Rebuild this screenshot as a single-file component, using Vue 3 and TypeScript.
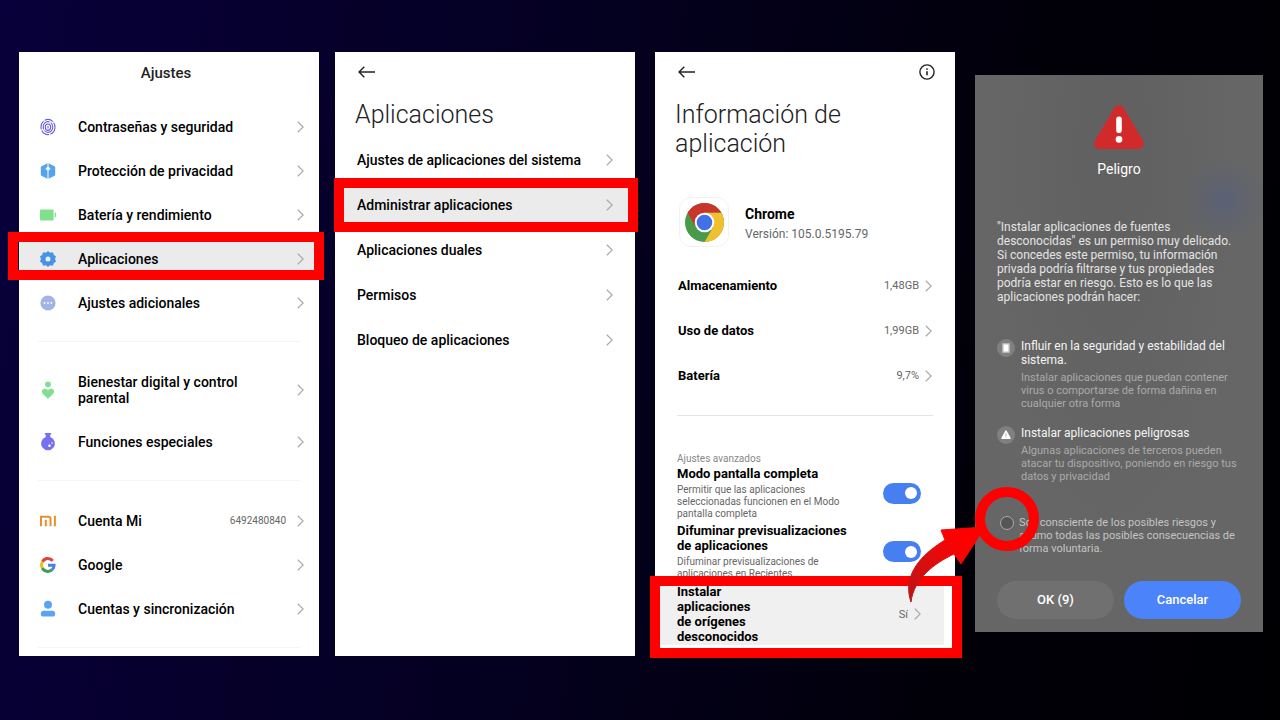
<script setup lang="ts">
import { ref } from 'vue'

interface Row {
  label: string
  icon?: string
  value?: string
  active?: boolean
  tall?: boolean
}

const settingsGroups: Row[][] = [
  [
    { label: 'Contraseñas y seguridad', icon: 'fingerprint' },
    { label: 'Protección de privacidad', icon: 'shield' },
    { label: 'Batería y rendimiento', icon: 'battery' },
    { label: 'Aplicaciones', icon: 'gear', active: true },
    { label: 'Ajustes adicionales', icon: 'dots' },
  ],
  [
    { label: 'Bienestar digital y control\nparental', icon: 'wellbeing', tall: true },
    { label: 'Funciones especiales', icon: 'flask' },
  ],
  [
    { label: 'Cuenta Mi', icon: 'mi', value: '6492480840' },
    { label: 'Google', icon: 'google' },
    { label: 'Cuentas y sincronización', icon: 'person' },
  ],
]

const appRows: Row[] = [
  { label: 'Ajustes de aplicaciones del sistema' },
  { label: 'Administrar aplicaciones', active: true },
  { label: 'Aplicaciones duales' },
  { label: 'Permisos' },
  { label: 'Bloqueo de aplicaciones' },
]

const usageRows: Row[] = [
  { label: 'Almacenamiento', value: '1,48GB' },
  { label: 'Uso de datos', value: '1,99GB' },
  { label: 'Batería', value: '9,7%' },
]

const toggles = ref([
  {
    id: 'fullscreen',
    title: 'Modo pantalla completa',
    text: 'Permitir que las aplicaciones\nseleccionadas funcionen en el Modo\npantalla completa',
    on: true,
  },
  {
    id: 'blur-previews',
    title: 'Difuminar previsualizaciones\nde aplicaciones',
    text: 'Difuminar previsualizaciones de\naplicaciones en Recientes',
    on: true,
  },
])

const risks = [
  {
    icon: 'device',
    title: 'Influir en la seguridad y estabilidad del\nsistema.',
    text: 'Instalar aplicaciones que puedan contener\nvirus o comportarse de forma dañina en\ncualquier otra forma',
  },
  {
    icon: 'alert',
    title: 'Instalar aplicaciones peligrosas',
    text: 'Algunas aplicaciones de terceros pueden\natacar tu dispositivo, poniendo en riesgo tus\ndatos y privacidad',
  },
]

const accepted = ref(false)
</script>

<template>
  <main class="stage">
    <section class="panel panel-settings">
      <h1 class="settings-title">Ajustes</h1>
      <template v-for="(group, g) in settingsGroups" :key="g">
        <nav class="group">
          <a
            v-for="row in group"
            :key="row.label"
            href="#"
            class="row"
            :class="{ active: row.active, tall: row.tall }"
          >
            <svg class="row-icon" viewBox="0 0 16 16" aria-hidden="true">
              <g v-if="row.icon === 'fingerprint'" fill="none" stroke="#6a5fd6" stroke-width="1.1">
                <ellipse cx="8" cy="8" rx="7" ry="7.6" stroke-dasharray="9 1.2" />
                <ellipse cx="8" cy="8" rx="4.8" ry="5.4" stroke-dasharray="12 1.2" />
                <ellipse cx="8" cy="8.2" rx="2.7" ry="3.2" />
                <path d="M8 6.9v2.6" />
              </g>
              <g v-else-if="row.icon === 'shield'" fill="#56a4ef">
                <path d="M7.5.2v3.600L5.400 5.700l2.100 1.900v8.200L1.400 12.800Q.8 12.500.8 11.800V4.200Q.8 3.500 1.400 3.200Z" />
                <path d="M8.500.2v3.600l2.100 1.900-2.100 1.900v8.200l6.100-3q.6-.3.6-1V4.200q0-.7-.6-1Z" />
              </g>
              <g v-else-if="row.icon === 'battery'" fill="#80e08c">
                <rect x="0" y="2.500" width="13.600" height="11" rx="1" />
                <rect x="14.700" y="5.600" width="1.300" height="4.600" rx=".4" />
              </g>
              <g v-else-if="row.icon === 'gear'" fill="#4793e4">
                <path
                  fill-rule="evenodd"
                  d="M8 0l2.100 1.700 2.800-.5.800 2.600L16 5.500 15 8l1 2.500-2.300 1.700-.8 2.600-2.800-.5L8 16l-2.100-1.700-2.800.5-.8-2.600L0 10.500 1 8 0 5.500l2.300-1.700.8-2.600 2.800.5ZM8 5.500a2.500 2.500 0 1 0 0 5 2.500 2.500 0 0 0 0-5Z"
                />
              </g>
              <g v-else-if="row.icon === 'dots'">
                <circle cx="8" cy="8" r="7.600" fill="#a3b3e4" />
                <g fill="#fff">
                  <circle cx="4.600" cy="8" r=".9" />
                  <circle cx="8" cy="8" r=".9" />
                  <circle cx="11.400" cy="8" r=".9" />
                </g>
              </g>
              <g v-else-if="row.icon === 'wellbeing'" fill="#7fe092">
                <circle cx="8" cy="2.300" r="2.900" />
                <path d="M8 8.200C9.300 6 14.200 6 14.200 9.300c0 2.900-4.300 5.200-6.200 7.700-1.900-2.500-6.200-4.800-6.200-7.700C1.800 6 6.700 6 8 8.200Z" />
              </g>
              <g v-else-if="row.icon === 'flask'">
                <path
                  fill="#7672ef"
                  d="M4.800-1h6.400v1.600h-.9v2.300A6.900 6.900 0 1 1 5.700 2.900V.6h-.9Z"
                />
                <circle cx="9.500" cy="11.800" r="1.300" fill="#fff" />
                <circle cx="12" cy="9" r=".8" fill="#fff" />
              </g>
              <g v-else-if="row.icon === 'mi'" fill="none" stroke="#e8912c" stroke-width="2">
                <path d="M1 13.200V3.800h7.200q2.300 0 2.300 2.300v7.100M5.800 6.800v6.400M14.900 2.800v10.400" />
              </g>
              <g v-else-if="row.icon === 'google'" fill="none" stroke-width="3">
                <path d="M2.500 4.700A6.200 6.200 0 0 1 12.700 3.900" stroke="#dc4437" />
                <path d="M2.300 11A6.200 6.200 0 0 1 2.500 4.700" stroke="#f3b92a" />
                <path d="M12.100 12.700A6.200 6.200 0 0 1 2.300 11" stroke="#3f9d50" />
                <path d="M8 8.300h6.100q0 2.900-2 4.400" stroke="#4a7fe8" />
              </g>
              <g v-else fill="#5aa5f0">
                <circle cx="8" cy="3.800" r="4" />
                <rect x=".8" y="9.800" width="14.400" height="5.800" rx="2.900" />
              </g>
            </svg>
            <span class="row-label">{{ row.label }}</span>
            <span v-if="row.value" class="row-value account">{{ row.value }}</span>
            <svg class="chevron" viewBox="0 0 7 12" aria-hidden="true"><path d="M.8.8 6.200 6 .8 11.200" /></svg>
            <span v-if="row.active" class="frame frame-settings"></span>
          </a>
        </nav>
        <hr class="divider" />
      </template>
    </section>

    <section class="panel panel-apps">
      <header class="bar">
        <button type="button" class="icon-button" aria-label="Atrás">
          <svg class="back" viewBox="0 0 18 12" aria-hidden="true"><path d="M17 6H1M6.300.8 1 6l5.300 5.200" /></svg>
        </button>
      </header>
      <h2 class="heading">Aplicaciones</h2>
      <nav class="app-list">
        <a v-for="row in appRows" :key="row.label" href="#" class="row" :class="{ active: row.active }">
          <span class="row-label">{{ row.label }}</span>
          <svg class="chevron" viewBox="0 0 7 12" aria-hidden="true"><path d="M.8.8 6.200 6 .8 11.200" /></svg>
          <span v-if="row.active" class="frame frame-apps"></span>
        </a>
      </nav>
    </section>

    <section class="panel panel-info">
      <header class="bar">
        <button type="button" class="icon-button" aria-label="Atrás">
          <svg class="back" viewBox="0 0 18 12" aria-hidden="true"><path d="M17 6H1M6.300.8 1 6l5.300 5.200" /></svg>
        </button>
        <button type="button" class="icon-button" aria-label="Información">
          <svg class="info" viewBox="0 0 16 16" aria-hidden="true">
            <circle cx="8" cy="8" r="7.100" fill="none" stroke="#222" stroke-width="1.400" />
            <path d="M8 7.200v4.100" stroke="#222" stroke-width="1.600" />
            <circle cx="8" cy="5.100" r=".9" fill="#222" />
          </svg>
        </button>
      </header>
      <h2 class="heading">{{ 'Información de\naplicación' }}</h2>
      <div class="app">
        <span class="app-icon">
          <svg viewBox="0 0 40 40" aria-hidden="true">
            <circle cx="20" cy="20" r="20" fill="#4b9a4a" />
            <path d="M2.680 10A20 20 0 0 1 37.320 10H20L11.340 25Z" fill="#c9352b" />
            <path d="M37.320 10A20 20 0 0 1 20 40L28.660 25 20 10Z" fill="#f0c02f" />
            <circle cx="20" cy="20" r="10" fill="#fff" />
            <circle cx="20" cy="20" r="8" fill="#4271e6" />
          </svg>
        </span>
        <div class="app-text">
          <h3 class="app-name">Chrome</h3>
          <p class="app-version">Versión: 105.0.5195.79</p>
        </div>
      </div>
      <nav class="usage">
        <a v-for="row in usageRows" :key="row.label" href="#" class="row">
          <span class="row-label">{{ row.label }}</span>
          <span class="row-value">{{ row.value }}</span>
          <svg class="chevron" viewBox="0 0 7 12" aria-hidden="true"><path d="M.8.8 6.200 6 .8 11.200" /></svg>
        </a>
      </nav>
      <hr class="divider" />
      <p class="section-label">Ajustes avanzados</p>
      <div v-for="item in toggles" :key="item.id" class="option">
        <label :for="item.id" class="option-text">
          <span class="option-title">{{ item.title }}</span>
          <span class="option-desc">{{ item.text }}</span>
        </label>
        <input :id="item.id" v-model="item.on" type="checkbox" role="switch" class="switch" />
      </div>
      <a href="#" class="unknown">
        <span class="option-title">{{ 'Instalar\naplicaciones\nde orígenes\ndesconocidos' }}</span>
        <span class="row-value">Sí</span>
        <svg class="chevron" viewBox="0 0 7 12" aria-hidden="true"><path d="M.8.8 6.200 6 .8 11.200" /></svg>
        <span class="frame frame-info"></span>
      </a>
    </section>

    <section class="dialog" role="dialog" aria-labelledby="danger-title">
      <svg class="danger" viewBox="0 0 50 44" aria-hidden="true">
        <path d="M20.600 2.500Q25-2 29.400 2.500L49.200 36Q51 43 45 44H5Q-1 43 .8 36Z" fill="#d22a2b" />
        <path d="M25 14.300v11" stroke="#fff" stroke-width="5.600" stroke-linecap="round" />
        <circle cx="25" cy="34.400" r="3.300" fill="#fff" />
      </svg>
      <h2 id="danger-title" class="danger-title">Peligro</h2>
      <p class="intro">{{ '"Instalar aplicaciones de fuentes\ndesconocidas" es un permiso muy delicado.\nSi concedes este permiso, tu información\nprivada podría filtrarse y tus propiedades\npodría estar en riesgo. Esto es lo que las\naplicaciones podrán hacer:' }}</p>
      <ul class="risks">
        <li v-for="risk in risks" :key="risk.title" class="risk">
          <svg class="risk-icon" viewBox="0 0 18 18" aria-hidden="true">
            <circle cx="9" cy="9" r="9" fill="#808080" />
            <template v-if="risk.icon === 'device'">
              <rect x="5" y="4" width="8" height="10" rx="1" fill="#b5b5b5" />
              <rect x="6.500" y="5.400" width="5" height="7.200" fill="#fff" />
            </template>
            <template v-else>
              <path d="M9 5 13 12.200H5Z" fill="#fff" stroke="#fff" stroke-width="1.400" stroke-linejoin="round" />
              <path d="M9 7.400v2.300M9 10.500v1" stroke="#999" stroke-width=".9" />
            </template>
          </svg>
          <div>
            <h3 class="risk-title">{{ risk.title }}</h3>
            <p class="risk-text">{{ risk.text }}</p>
          </div>
        </li>
      </ul>
      <div class="consent">
        <input id="consent" v-model="accepted" type="checkbox" class="consent-box" />
        <label for="consent" class="consent-text">{{ 'Soy consciente de los posibles riesgos y\nasumo todas las posibles consecuencias de\nforma voluntaria.' }}</label>
        <svg class="pointer" viewBox="0 0 84 84" aria-hidden="true">
          <defs>
            <linearGradient id="pointer-fill" x1="0" y1="1" x2="1" y2="0">
              <stop offset="0" stop-color="#b81518" />
              <stop offset=".5" stop-color="#e50b0c" />
              <stop offset=".75" stop-color="#f00" />
            </linearGradient>
          </defs>
          <path
            d="M36 8 80 5 56 42 49 32C30 41 9 56 6 80C-1 60 7 38 40 18Z"
            fill="url(#pointer-fill)"
            stroke="url(#pointer-fill)"
            stroke-width="1"
            stroke-linejoin="round"
          />
        </svg>
        <span class="ring"></span>
      </div>
      <div class="actions">
        <button type="button" class="action">OK (9)</button>
        <button type="button" class="action primary">Cancelar</button>
      </div>
    </section>
  </main>
</template>

<style>
body {
  margin: 0;
  background: #02000f;
}
</style>

<style scoped>
.stage {
  box-sizing: border-box;
  display: grid;
  grid-template-columns: minmax(0, 300fr) minmax(0, 316fr) minmax(0, 320fr) minmax(0, 308fr);
  align-items: stretch;
  min-height: 100vh;
  padding: 52px 17px 64px 19px;
  font-family: Roboto, "Liberation Sans", sans-serif;
  background: linear-gradient(100deg, #08003a 0%, #04001f 45%, #010009 75%, #000003 100%);
}

h1, h2, h3, p, ul {
  margin: 0;
  padding: 0;
  font-weight: 400;
}

a {
  color: inherit;
  text-decoration: none;
}

.panel {
  color: #000;
  background: #fff;
}

.panel-apps {
  margin-left: 16px;
}

.panel-info,
.dialog {
  margin-left: 20px;
}

.settings-title {
  padding: 10px 6px 11px 0;
  font-size: 15px;
  line-height: 22px;
  font-weight: 500;
  color: #222;
  text-align: center;
}

.settings-title + .group {
  padding-top: 10px;
}

.row {
  position: relative;
  display: flex;
  align-items: center;
  height: 44px;
  font-size: 14px;
  line-height: 16px;
  font-weight: 500;
}

.group .row {
  padding: 0 15px 0 21px;
}

.group .tall {
  height: 60px;
}

.row-icon {
  flex: none;
  width: 16px;
  height: 16px;
  margin-right: 22px;
  overflow: visible;
}

.row-label {
  flex: 1;
  white-space: pre-line;
}

.row-value {
  font-size: 11px;
  font-weight: 400;
  color: #666;
}

.row-value.account {
  font-size: 10px;
}

.chevron {
  flex: none;
  width: 7px;
  height: 12px;
  margin-left: 6px;
  fill: none;
  stroke: #a9a9a9;
  stroke-width: 1.2;
}

.account + .chevron {
  margin-left: 11px;
}

.active {
  background: #ebebeb linear-gradient(#fff, #fff) no-repeat bottom / 100% 1px;
}

.divider {
  height: 1px;
  margin: 16px 19px 18px;
  border: 0;
  background: #f4f4f4;
}

.panel-settings > .divider:last-child {
  margin-bottom: 8px;
}

.frame {
  position: absolute;
  border: 10px solid #f00;
  pointer-events: none;
}

.frame-settings {
  inset: -5px -5px 1px -11px;
}

.frame-apps {
  inset: -4px -3px -5px -1px;
}

.frame-info {
  inset: -5px -18px -13px -5px;
}

.bar {
  display: flex;
  justify-content: space-between;
  padding: 8px 20px 0 23px;
}

.icon-button {
  display: flex;
  align-items: center;
  height: 24px;
  padding: 0;
  border: 0;
  background: none;
}

.back {
  width: 18px;
  height: 12px;
  fill: none;
  stroke: #222;
  stroke-width: 1.4;
}

.info {
  width: 16px;
  height: 16px;
}

.heading {
  margin: 16px 20px 0;
  font-size: 25px;
  line-height: 29px;
  font-weight: 300;
  color: #222;
  white-space: pre-line;
}

.app-list {
  margin-top: 8px;
}

.app-list .row {
  height: 45px;
  padding: 0 22px;
}

.app {
  display: flex;
  align-items: center;
  gap: 16px;
  margin: 39px 24px 0;
}

.app-icon {
  box-sizing: border-box;
  display: flex;
  align-items: center;
  justify-content: center;
  width: 50px;
  height: 50px;
  border: 1px solid #f2f2f2;
  border-radius: 12px;
}

.app-icon svg {
  width: 39px;
  height: 39px;
}

.app-text {
  padding-top: 3px;
}

.app-name {
  font-size: 14px;
  line-height: 20px;
  font-weight: 700;
}

.app-version {
  font-size: 12px;
  line-height: 20px;
  color: #666;
}

.usage {
  padding: 16px 23px 0;
}

.usage .row {
  height: 45px;
  font-size: 13px;
  font-weight: 700;
}

.panel-info .divider {
  margin: 17px 22px 36px;
  background: #e4e4e4;
}

.section-label {
  margin: 0 22px;
  font-size: 10px;
  line-height: 14px;
  color: #888;
}

.option {
  display: flex;
  align-items: center;
  justify-content: space-between;
  padding: 0 34px 3px 22px;
}

.option + .unknown {
  margin-top: -2px;
}

.option-title,
.option-desc {
  display: block;
  white-space: pre-line;
}

.option-title {
  font-size: 13px;
  line-height: 15px;
  font-weight: 700;
}

.option-desc {
  margin-top: 3px;
  font-size: 10px;
  line-height: 12px;
  color: #666;
}

.switch {
  appearance: none;
  flex: none;
  display: flex;
  align-items: center;
  justify-content: flex-end;
  box-sizing: border-box;
  width: 38px;
  height: 21px;
  margin: 0;
  padding: 0 4px;
  border-radius: 11px;
  background: #457ff2;
}

.switch::before {
  content: "";
  width: 12px;
  height: 12px;
  border-radius: 50%;
  background: #fff;
}

.switch:not(:checked) {
  justify-content: flex-start;
  background: #ccc;
}

.unknown {
  position: relative;
  display: flex;
  align-items: center;
  margin-right: 11px;
  padding: 3px 23px 1px 22px;
  background: #f0f0f0;
}

.unknown .option-title {
  flex: 1;
}

.dialog {
  position: relative;
  align-self: flex-start;
  margin-top: 23px;
  padding: 30px 22px 13px;
  color: #fff;
  background:
    radial-gradient(circle at 249px 125px, rgba(80, 95, 135, 0.5) 0, rgba(85, 95, 125, 0.3) 20px, transparent 42px),
    radial-gradient(ellipse at 48% 15%, #606060 0, #666 60%);
}

.danger {
  display: block;
  width: 50px;
  height: 44px;
  margin: 0 auto 12px;
}

.danger-title {
  font-size: 14px;
  line-height: 16px;
  text-align: center;
}

.intro {
  margin-top: 43px;
  font-size: 12px;
  line-height: 14px;
  color: #e4e4e4;
  white-space: pre-line;
}

.risks {
  display: grid;
  gap: 16px;
  margin-top: 35px;
  list-style: none;
}

.risk {
  display: flex;
  align-items: flex-start;
  gap: 6px;
}

.risk-icon {
  flex: none;
  width: 18px;
  height: 18px;
}

.risk-title {
  font-size: 12px;
  line-height: 14px;
  color: #f4f4f4;
  white-space: pre-line;
}

.risk-text {
  margin-top: 4px;
  font-size: 11px;
  line-height: 13px;
  color: #aaa;
  white-space: pre-line;
}

.consent {
  position: relative;
  display: flex;
  align-items: flex-start;
  gap: 5px;
  margin-top: 33px;
  padding-left: 3px;
}

.consent-box {
  appearance: none;
  flex: none;
  box-sizing: border-box;
  width: 14px;
  height: 14px;
  margin: 0;
  border: 1px solid #aaa;
  border-radius: 50%;
  background: #555;
}

.consent-box:checked {
  background: #457ff2;
}

.consent-text {
  font-size: 11px;
  line-height: 13px;
  color: #c4c4c4;
  white-space: pre-line;
}

.pointer {
  position: absolute;
  top: 6px;
  left: -92px;
  width: 84px;
  height: 84px;
  pointer-events: none;
}

.ring {
  position: absolute;
  top: -29px;
  left: -22px;
  box-sizing: border-box;
  width: 64px;
  height: 64px;
  border: 10px solid #f00;
  border-radius: 50%;
  pointer-events: none;
}

.actions {
  display: flex;
  gap: 10px;
  margin-top: 26px;
}

.action {
  flex: 1;
  height: 38px;
  padding: 0;
  border: 0;
  border-radius: 19px;
  font: 500 13px/16px Roboto, "Liberation Sans", sans-serif;
  color: #fff;
  background: #707070;
}

.primary {
  background: #4b83fb;
}
</style>
